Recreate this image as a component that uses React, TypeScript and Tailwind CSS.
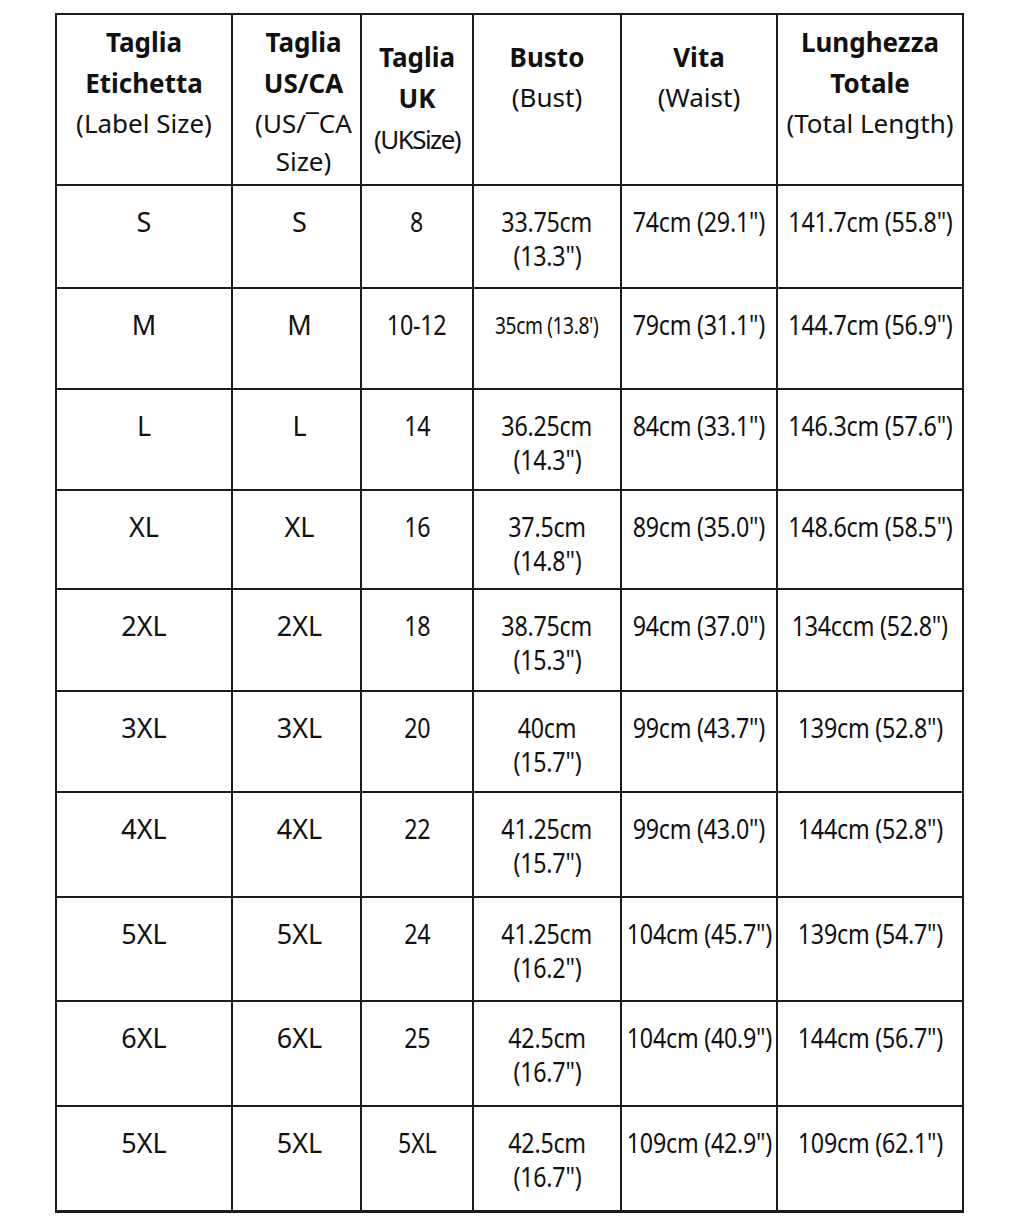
import React from 'react';

type Row = {
    label: string;
    us: string;
    uk: string;
    bust: string[];
    waist: string;
    length: string;
    h: string;
    last?: boolean;
};

const rows: Row[] = [
    { label: 'S', us: 'S', uk: '8', bust: ['33.75cm', '(13.3")'], waist: '74cm (29.1")', length: '141.7cm (55.8")', h: 'h-[103px]' },
    { label: 'M', us: 'M', uk: '10-12', bust: ['35cm (13.8\')'], waist: '79cm (31.1")', length: '144.7cm (56.9")', h: 'h-[101px]' },
    { label: 'L', us: 'L', uk: '14', bust: ['36.25cm', '(14.3")'], waist: '84cm (33.1")', length: '146.3cm (57.6")', h: 'h-[101px]' },
    { label: 'XL', us: 'XL', uk: '16', bust: ['37.5cm', '(14.8")'], waist: '89cm (35.0")', length: '148.6cm (58.5")', h: 'h-[99px]' },
    { label: '2XL', us: '2XL', uk: '18', bust: ['38.75cm', '(15.3")'], waist: '94cm (37.0")', length: '134ccm (52.8")', h: 'h-[102px]' },
    { label: '3XL', us: '3XL', uk: '20', bust: ['40cm', '(15.7")'], waist: '99cm (43.7")', length: '139cm (52.8")', h: 'h-[101px]' },
    { label: '4XL', us: '4XL', uk: '22', bust: ['41.25cm', '(15.7")'], waist: '99cm (43.0")', length: '144cm (52.8")', h: 'h-[105px]' },
    { label: '5XL', us: '5XL', uk: '24', bust: ['41.25cm', '(16.2")'], waist: '104cm (45.7")', length: '139cm (54.7")', h: 'h-[104px]' },
    { label: '6XL', us: '6XL', uk: '25', bust: ['42.5cm', '(16.7")'], waist: '104cm (40.9")', length: '144cm (56.7")', h: 'h-[105px]' },
    { label: '5XL', us: '5XL', uk: '5XL', bust: ['42.5cm', '(16.7")'], waist: '109cm (42.9")', length: '109cm (62.1")', h: 'h-[106px]', last: true },
];

const cell = 'border-r-2 border-b-2 border-[#1c1c1c] flex flex-col items-center text-center';
const body = 'pt-[19px] leading-[34px] whitespace-nowrap';
// measurements are set in a narrow cut of the face in the chart
const narrow = 'inline-block text-[27px] tracking-[-0.01em] scale-x-[0.86]';

const Head: React.FC<{ bold: string[]; light: string[]; pt: string }> = ({ bold, light, pt }) => (
    <div className={`${cell} h-[171px] ${pt}`}>
        {bold.map((b, i) => (
            <span key={i} className="font-bold text-[26px] leading-[41px]">{b}</span>
        ))}
        {light.map((l, i) => (
            <span key={i} className="text-[26px] leading-[38px] whitespace-nowrap">{l}</span>
        ))}
    </div>
);

export default function App() {
    return (
        <div className="min-h-[1220px] bg-white pt-[13px] pl-[55px] text-[#111]" style={{ fontFamily: '"Noto Sans", "Open Sans", sans-serif' }}>
            <div className="grid w-[909px] grid-cols-[176px_129px_112px_148px_156px_186px] border-l-2 border-t-2 border-[#1c1c1c]">
                <Head bold={['Taglia', 'Etichetta']} light={['(Label Size)']} pt="pt-[7px]" />
                <div className={`${cell} h-[171px] pt-[7px] pl-[14px]`}>
                    <span className="font-bold text-[26px] leading-[41px]">Taglia</span>
                    <span className="font-bold text-[26px] leading-[41px]">US/CA</span>
                    <span className="text-[26px] leading-[38px] whitespace-nowrap">(US/¯CA</span>
                    <span className="text-[26px] leading-[38px]">Size)</span>
                </div>
                <div className={`${cell} h-[171px] pt-[22px]`}>
                    <span className="font-bold text-[26px] leading-[41px]">Taglia</span>
                    <span className="font-bold text-[26px] leading-[41px]">UK</span>
                    <span className="text-[26px] leading-[40px] tracking-[-0.06em] whitespace-nowrap">(UKSize)</span>
                </div>
                <Head bold={['Busto']} light={['(Bust)']} pt="pt-[22px]" />
                <Head bold={['Vita']} light={['(Waist)']} pt="pt-[22px]" />
                <Head bold={['Lunghezza', 'Totale']} light={['(Total Length)']} pt="pt-[7px]" />

                {rows.map((r, i) => {
                    const bb = r.last ? 'border-b-[3px]' : '';
                    return (
                        <React.Fragment key={i}>
                            <div className={`${cell} ${r.h} ${bb} ${body} text-[27px]`}>{r.label}</div>
                            <div className={`${cell} ${r.h} ${bb} ${body} text-[27px] pl-[6px]`}>{r.us}</div>
                            <div className={`${cell} ${r.h} ${bb} ${body}`}>
                                <span className={narrow}>{r.uk}</span>
                            </div>
                            <div className={`${cell} ${r.h} ${bb} ${body}`}>
                                {r.bust.length === 1 ? (
                                    <span className="inline-block text-[24px] scale-x-[0.8] tracking-[-0.02em]">{r.bust[0]}</span>
                                ) : (
                                    r.bust.map((b, j) => <span key={j} className={narrow}>{b}</span>)
                                )}
                            </div>
                            <div className={`${cell} ${r.h} ${bb} ${body}`}>
                                <span className={narrow}>{r.waist}</span>
                            </div>
                            <div className={`${cell} ${r.h} ${bb} ${body}`}>
                                <span className={narrow}>{r.length}</span>
                            </div>
                        </React.Fragment>
                    );
                })}
            </div>
        </div>
    );
}
